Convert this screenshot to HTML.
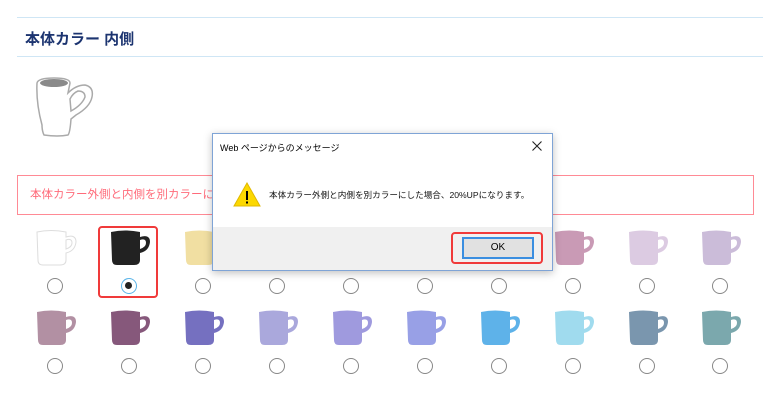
<!DOCTYPE html>
<html><head><meta charset="utf-8"><style>
body{margin:0;width:780px;height:410px;background:#fff;position:relative;overflow:hidden;font-family:"Liberation Sans","Noto Sans CJK JP",sans-serif}
.ln{position:absolute;left:17px;width:746px;height:1px;background:#cfe6f5}
.h{position:absolute;left:25px;top:28px;font-size:15px;font-weight:bold;color:#1c3470}
.warn{position:absolute;left:17px;top:175px;width:737px;height:40px;border:1px solid #ff8a95;color:#ff6b7a;font-size:11.5px;line-height:38px;box-sizing:border-box;padding-left:12px;white-space:nowrap}
.m{position:absolute;width:42px;height:38px}
.r{position:absolute;width:16px;height:16px;border:1.5px solid #888;border-radius:50%;box-sizing:border-box;background:#fff}
.dlg{position:absolute;left:212px;top:133px;width:341px;height:138px;border:1px solid #7fa4d6;background:#fff;box-shadow:0 2px 8px rgba(0,0,0,.25);box-sizing:border-box;font-size:11px;color:#000}
.foot{position:absolute;left:0;right:0;bottom:0;height:43px;background:#f0f0f0}
</style></head><body>
<svg width="0" height="0" style="position:absolute"><defs>
<path id="mug" d="M2 3 Q16 0 31 3 L31 8 Q41 5 41 13 Q40 22 31 24 L31 31 Q31 36 25 36 L8 36 Q3 36 3 31 Z M31 11 L31 20 Q37 18 37 14 Q37 9 31 11 Z" fill-rule="evenodd"/>
</defs></svg>
<div class="ln" style="top:17px"></div>
<div class="h">本体カラー 内側</div>
<div class="ln" style="top:56px"></div>
<svg style="position:absolute;left:30px;top:75px" width="66" height="64" viewBox="0 0 66 64">
<path d="M7 8 Q8 3 24 3 Q40 3 40 8 L38 18 Q46 10 55 10 Q64 12 62 22 Q60 32 46 40 L41 44 Q40 58 38 60 Q28 62 14 60 Q12 56 12 50 Q6 28 7 8 Z M40 24 L41 36 Q52 30 55 22 Q55 16 48 16 Q43 18 40 24 Z" fill="#fff" stroke="#aaa" stroke-width="1.5" fill-rule="evenodd"/>
<ellipse cx="24" cy="8" rx="14" ry="4" fill="#8a8a8a"/>
</svg>
<div class="warn">本体カラー外側と内側を別カラーにした場合、20%UPになります。</div>
<div style="position:absolute;left:98px;top:226px;width:60px;height:72px;border:2px solid #f03a3a;border-radius:4px;box-sizing:border-box"></div>

<svg class="m" style="left:35px;top:229px" viewBox="0 0 42 38"><use href="#mug" fill="#fff" stroke="#ddd" stroke-width="1"/></svg>
<svg class="m" style="left:109px;top:229px" viewBox="0 0 42 38"><use href="#mug" fill="#222"/></svg>
<svg class="m" style="left:183px;top:229px" viewBox="0 0 42 38"><use href="#mug" fill="#f1dfa2"/></svg>
<svg class="m" style="left:553px;top:229px" viewBox="0 0 42 38"><use href="#mug" fill="#c99ab5"/></svg>
<svg class="m" style="left:627px;top:229px" viewBox="0 0 42 38"><use href="#mug" fill="#dccbe2"/></svg>
<svg class="m" style="left:700px;top:229px" viewBox="0 0 42 38"><use href="#mug" fill="#cbbcd9"/></svg>
<svg class="m" style="left:35px;top:309px" viewBox="0 0 42 38"><use href="#mug" fill="#b290a3"/></svg>
<svg class="m" style="left:109px;top:309px" viewBox="0 0 42 38"><use href="#mug" fill="#86587b"/></svg>
<svg class="m" style="left:183px;top:309px" viewBox="0 0 42 38"><use href="#mug" fill="#7570c0"/></svg>
<svg class="m" style="left:257px;top:309px" viewBox="0 0 42 38"><use href="#mug" fill="#aaa8dc"/></svg>
<svg class="m" style="left:331px;top:309px" viewBox="0 0 42 38"><use href="#mug" fill="#9f9ade"/></svg>
<svg class="m" style="left:405px;top:309px" viewBox="0 0 42 38"><use href="#mug" fill="#98a0e6"/></svg>
<svg class="m" style="left:479px;top:309px" viewBox="0 0 42 38"><use href="#mug" fill="#5eb2e9"/></svg>
<svg class="m" style="left:553px;top:309px" viewBox="0 0 42 38"><use href="#mug" fill="#a0dbee"/></svg>
<svg class="m" style="left:627px;top:309px" viewBox="0 0 42 38"><use href="#mug" fill="#7a96ae"/></svg>
<svg class="m" style="left:700px;top:309px" viewBox="0 0 42 38"><use href="#mug" fill="#7ba8ad"/></svg>

<div class="r" style="left:47px;top:278px"></div>
<div class="r" style="left:121px;top:278px;border-color:#5ab4e8"><div style="position:absolute;left:3px;top:3px;width:7px;height:7px;border-radius:50%;background:#222"></div></div>
<div class="r" style="left:195px;top:278px"></div>
<div class="r" style="left:269px;top:278px"></div>
<div class="r" style="left:343px;top:278px"></div>
<div class="r" style="left:417px;top:278px"></div>
<div class="r" style="left:491px;top:278px"></div>
<div class="r" style="left:565px;top:278px"></div>
<div class="r" style="left:639px;top:278px"></div>
<div class="r" style="left:712px;top:278px"></div>
<div class="r" style="left:47px;top:358px"></div>
<div class="r" style="left:121px;top:358px"></div>
<div class="r" style="left:195px;top:358px"></div>
<div class="r" style="left:269px;top:358px"></div>
<div class="r" style="left:343px;top:358px"></div>
<div class="r" style="left:417px;top:358px"></div>
<div class="r" style="left:491px;top:358px"></div>
<div class="r" style="left:565px;top:358px"></div>
<div class="r" style="left:639px;top:358px"></div>
<div class="r" style="left:712px;top:358px"></div>

<div class="dlg">
 <div style="position:absolute;left:7px;top:7px;font-size:9px;white-space:nowrap">Web ページからのメッセージ</div>
 <svg style="position:absolute;right:10px;top:7px" width="10" height="10" viewBox="0 0 10 10"><path d="M0.5 0.5 L9.5 9.5 M9.5 0.5 L0.5 9.5" stroke="#222" stroke-width="1.1"/></svg>
 <svg style="position:absolute;left:20px;top:48px" width="28" height="25" viewBox="0 0 28 25"><path d="M14 1 L27 24 L1 24 Z" fill="#fcd800" stroke="#e0b800" stroke-width="1"/><rect x="13" y="9" width="2" height="9" fill="#000"/><rect x="13" y="19.5" width="2" height="2" fill="#000"/></svg>
 <div style="position:absolute;left:56px;top:55px;font-size:8.6px;color:#111;white-space:nowrap">本体カラー外側と内側を別カラーにした場合、20%UPになります。</div>
 <div class="foot">
  <div style="position:absolute;left:238px;top:5px;width:92px;height:32px;border:2px solid #f03a3a;border-radius:4px;box-sizing:border-box"></div>
  <div style="position:absolute;left:249px;top:10px;width:72px;height:22px;border:2px solid #3a8ee0;background:#e1e1e1;box-sizing:border-box;text-align:center;line-height:18px;font-size:10px">OK</div>
 </div>
</div>
</body></html>
